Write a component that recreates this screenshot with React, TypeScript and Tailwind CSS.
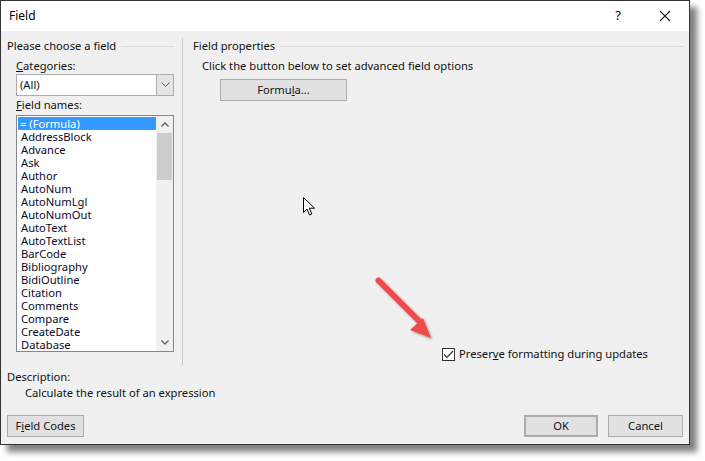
import React from "react";

const fieldNames = [
  "AddressBlock",
  "Advance",
  "Ask",
  "Author",
  "AutoNum",
  "AutoNumLgl",
  "AutoNumOut",
  "AutoText",
  "AutoTextList",
  "BarCode",
  "Bibliography",
  "BidiOutline",
  "Citation",
  "Comments",
  "Compare",
  "CreateDate",
  "Database",
];

const font = { fontFamily: '"Noto Sans", "Open Sans", sans-serif' };

const Btn = ({
  children,
  className = "",
}: {
  children: React.ReactNode;
  className?: string;
}) => (
  <div
    className={`h-[22px] flex items-center justify-center bg-[#e1e1e1] border border-[#adadad] text-[11.2px] text-[#111] ${className}`}
  >
    {children}
  </div>
);

const App = () => {
  return (
    <div className="w-[705px] h-[461px] bg-white relative overflow-hidden" style={font}>
      {/* Dialog */}
      <div className="w-[690px] h-[445px] border border-[#333] bg-[#f0f0f0] flex flex-col shadow-[7px_7px_6px_rgba(0,0,0,0.5)]">
        {/* Title bar */}
        <div className="h-[30px] bg-white flex items-center pl-[8px] text-[12px] text-black">
          <span className="flex-1">Field</span>
          <span className="w-[10px] text-center mr-[36px] text-[13px]">?</span>
          <svg width="12" height="12" viewBox="0 0 12 12" className="mr-[18px]">
            <path d="M1 1 L11 11 M11 1 L1 11" stroke="#222" strokeWidth="1.1" />
          </svg>
        </div>

        {/* Main area */}
        <div className="h-[336px] flex text-[11.2px] text-[#111]">
          {/* Left group */}
          <div className="w-[181px] pl-[6px] pr-[8px] pt-[7px] flex flex-col">
            <div className="flex items-center h-[16px] gap-[5px]">
              <span>Please choose a field</span>
              <div className="flex-1 h-px bg-[#dcdcdc]" />
            </div>
            <div className="pl-[9px] mt-[4px] leading-[16px]">
              <span className="underline">C</span>ategories:
            </div>
            <div className="ml-[9px] h-[22px] flex border border-[#adadad] bg-white">
              <div className="flex-1 pl-[3px] flex items-center">(All)</div>
              <div className="w-[17px] bg-[#e5e5e5] border-l border-[#adadad] flex items-center justify-center">
                <svg width="9" height="6" viewBox="0 0 9 6">
                  <path d="M0.5 0.5 L4.5 4.5 L8.5 0.5" stroke="#555" fill="none" strokeWidth="1" />
                </svg>
              </div>
            </div>
            <div className="pl-[9px] mt-[1px] leading-[16px]">
              <span className="underline">F</span>ield names:
            </div>
            <div className="ml-[9px] mt-[2px] h-[237px] border border-[#828790] bg-white flex overflow-hidden">
              <div className="flex-1 pt-px pl-px">
                <div className="h-[13px] bg-[#3399ff] text-white leading-[13px] pl-[2px] outline-1 outline-dotted outline-[#e07b20] -outline-offset-1">
                  = (Formula)
                </div>
                {fieldNames.map((n) => (
                  <div key={n} className="h-[13px] leading-[13px] pl-[3px] text-[#0a0a2a]">
                    {n}
                  </div>
                ))}
              </div>
              {/* Scrollbar */}
              <div className="w-[17px] bg-[#f0f0f0] flex flex-col items-center">
                <div className="h-[17px] flex items-center justify-center">
                  <svg width="8" height="5" viewBox="0 0 8 5">
                    <path d="M0.5 4.5 L4 1 L7.5 4.5" stroke="#606060" fill="none" strokeWidth="1.3" />
                  </svg>
                </div>
                <div className="w-[15px] h-[47px] bg-[#cdcdcd]" />
                <div className="flex-1" />
                <div className="h-[17px] flex items-center justify-center">
                  <svg width="8" height="5" viewBox="0 0 8 5">
                    <path d="M0.5 0.5 L4 4 L7.5 0.5" stroke="#606060" fill="none" strokeWidth="1.3" />
                  </svg>
                </div>
              </div>
            </div>
          </div>

          {/* Separator */}
          <div className="w-px bg-[#c8c8c8] mt-[7px] mb-[2px]" />

          {/* Right group */}
          <div className="flex-1 pl-[10px] pr-[5px] pt-[7px] flex flex-col">
            <div className="flex items-center h-[16px] gap-[5px]">
              <span>Field properties</span>
              <div className="flex-1 h-px bg-[#dcdcdc]" />
            </div>
            <div className="pl-[9px] mt-[4px] leading-[16px]">
              Click the button below to set advanced field options
            </div>
            <Btn className="ml-[27px] mt-[5px] w-[127px]">
              <span>
                Formu<span className="underline">l</span>a...
              </span>
            </Btn>
            <div className="flex-1" />
            <div className="flex items-center pl-[249px] mb-[4px] gap-[4px]">
              <div className="w-[13px] h-[13px] border border-[#333] bg-white flex items-center justify-center">
                <svg width="11" height="9" viewBox="0 0 11 9">
                  <path d="M1 4.5 L4 7.5 L10 1" stroke="#333" fill="none" strokeWidth="1.2" />
                </svg>
              </div>
              <span>
                Preser<span className="underline">v</span>e formatting during updates
              </span>
            </div>
          </div>
        </div>

        {/* Description */}
        <div className="pl-[6px] mt-[2px] text-[11.2px] text-[#111] leading-[16px]">
          <div>Description:</div>
          <div className="pl-[18px]">Calculate the result of an expression</div>
        </div>

        {/* Buttons */}
        <div className="flex mt-[14px] px-[6px]">
          <Btn className="w-[77px]">
            <span>
              F<span className="underline">i</span>eld Codes
            </span>
          </Btn>
          <div className="flex-1" />
          <Btn className="w-[74px] border-2 border-[#0078d7]">OK</Btn>
          <Btn className="w-[75px] ml-[10px]">Cancel</Btn>
        </div>
      </div>

      {/* Mouse cursor */}
      <svg className="absolute left-[303px] top-[197px]" width="13" height="20" viewBox="0 0 13 20">
        <path
          d="M0.5 0.5 L0.5 15.5 L4 12 L6.5 18 L8.8 17 L6.3 11.2 L11.5 11.2 Z"
          fill="#fff"
          stroke="#000"
          strokeWidth="1"
        />
      </svg>

      {/* Red annotation arrow */}
      <svg className="absolute left-[370px] top-[272px]" width="75" height="75" viewBox="0 0 75 75">
        <defs>
          <filter id="sh" x="-20%" y="-20%" width="150%" height="150%">
            <feDropShadow dx="1.5" dy="1.5" stdDeviation="1.2" floodColor="#000" floodOpacity="0.35" />
          </filter>
        </defs>
        <g filter="url(#sh)">
          <path d="M8.5 8.5 L50 50" stroke="#f04b4b" strokeWidth="6" strokeLinecap="round" />
          <path d="M40 58 L53 46 L61 66 Z" fill="#f04b4b" />
        </g>
      </svg>
    </div>
  );
};

export default App;
